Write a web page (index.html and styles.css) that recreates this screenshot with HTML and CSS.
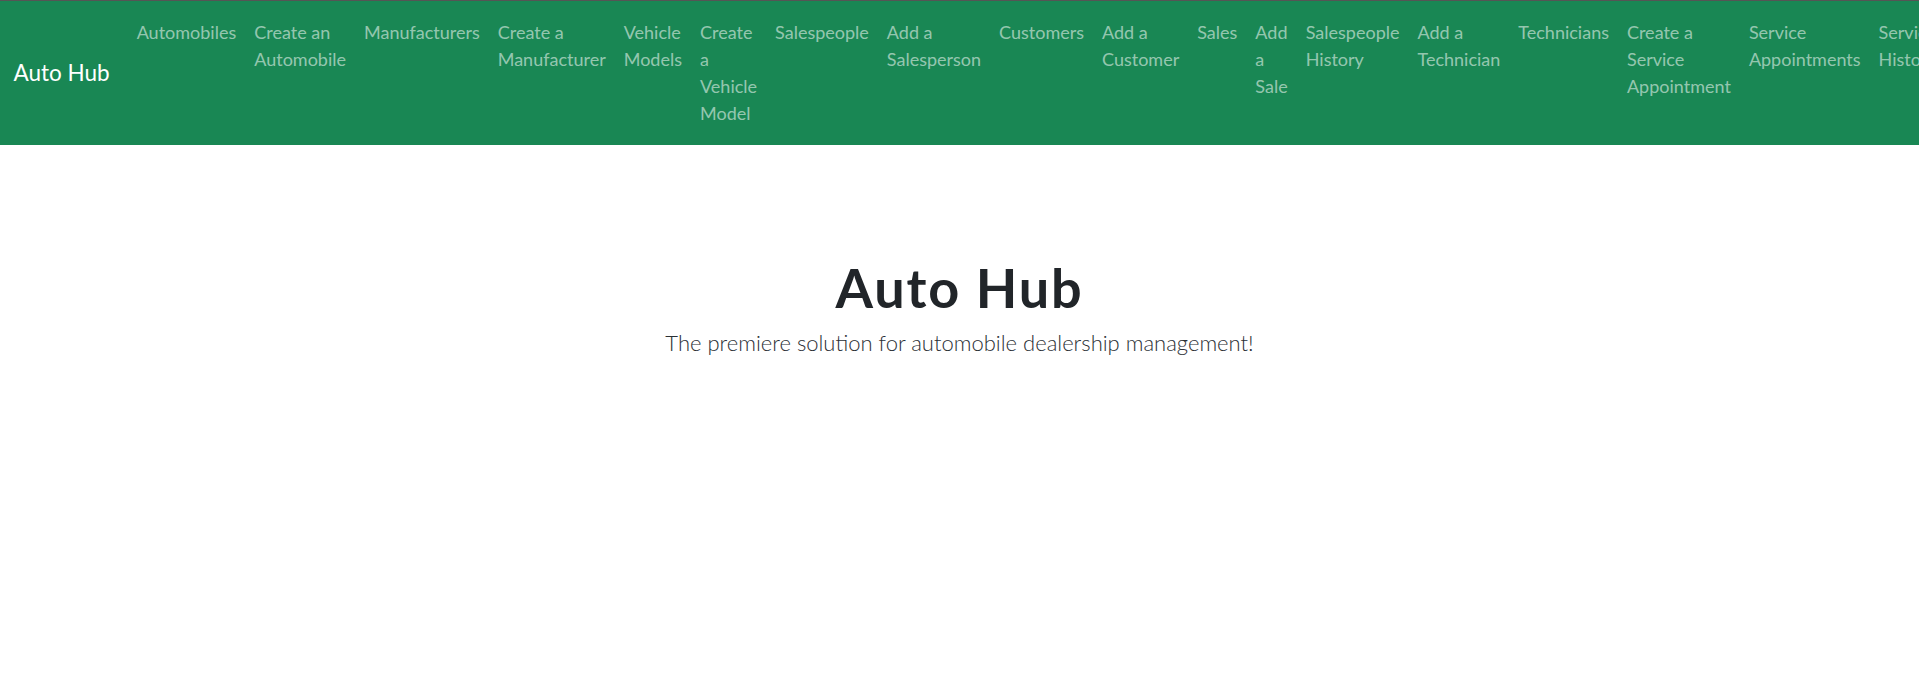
FILE: index.html
```html
<!DOCTYPE html>
<html lang="en">
<head>
<meta charset="utf-8">
<title>Auto Hub</title>
<link rel="stylesheet" href="styles.css">
</head>
<body>
<nav class="navbar">
  <div class="navbar-inner">
    <a class="brand" href="#">Auto Hub</a>
    <div class="collapse">
      <ul class="nav-list">
        <li class="nav-item"><a class="nav-link" href="#">Automobiles</a></li>
        <li class="nav-item"><a class="nav-link" href="#">Create an Automobile</a></li>
        <li class="nav-item"><a class="nav-link" href="#">Manufacturers</a></li>
        <li class="nav-item"><a class="nav-link" href="#">Create a Manufacturer</a></li>
        <li class="nav-item"><a class="nav-link" href="#">Vehicle Models</a></li>
        <li class="nav-item"><a class="nav-link" href="#">Create a Vehicle Model</a></li>
        <li class="nav-item"><a class="nav-link" href="#">Salespeople</a></li>
        <li class="nav-item"><a class="nav-link" href="#">Add a Salesperson</a></li>
        <li class="nav-item"><a class="nav-link" href="#">Customers</a></li>
        <li class="nav-item"><a class="nav-link" href="#">Add a Customer</a></li>
        <li class="nav-item"><a class="nav-link" href="#">Sales</a></li>
        <li class="nav-item"><a class="nav-link" href="#">Add a Sale</a></li>
        <li class="nav-item"><a class="nav-link" href="#">Salespeople History</a></li>
        <li class="nav-item"><a class="nav-link" href="#">Add a Technician</a></li>
        <li class="nav-item"><a class="nav-link" href="#">Technicians</a></li>
        <li class="nav-item"><a class="nav-link" href="#">Create a Service Appointment</a></li>
        <li class="nav-item"><a class="nav-link" href="#">Service Appointments</a></li>
        <li class="nav-item"><a class="nav-link" href="#">Service History</a></li>
      </ul>
    </div>
  </div>
</nav>
<main class="hero">
  <h1 class="hero-title">Auto Hub</h1>
  <div class="hero-body">
    <p class="lead">The premiere solution for automobile dealership management!</p>
  </div>
</main>
</body>
</html>
```
FILE: styles.css
```css
html, body {
  margin: 0;
  padding: 0;
  overflow: hidden;
}
body {
  font-family: Lato, "Open Sans", sans-serif;
  font-size: 18px;
  line-height: 1.5;
  color: #212529;
  background: #fff;
  width: 1919px;
}
.navbar {
  background: #198754;
  border-top: 1px solid #555;
  padding: 9px 0;
}
.navbar-inner {
  display: flex;
  align-items: center;
  padding: 0 13.5px;
}
.brand {
  font-size: 22.5px;
  line-height: 1.5;
  padding: 5.6px 0;
  margin-right: 18px;
  color: #fff;
  text-decoration: none;
  white-space: nowrap;
}
.collapse {
  display: flex;
  flex: 1 0 auto;
  align-items: center;
}
.nav-list {
  display: flex;
  flex-direction: row;
  list-style: none;
  margin: 0;
  padding: 0;
}
.nav-item {
  flex: 0 1 auto;
  min-width: min-content;
}
.nav-link {
  display: block;
  padding: 9px;
  width: min-content;
  color: rgba(255, 255, 255, 0.55);
  text-decoration: none;
  line-height: 27px;
}
.hero {
  display: block;
  margin: 54px 0;
  padding: 54px 27px;
  text-align: center;
}
.hero-title {
  margin: 0 0 5px;
  font-size: 54px;
  font-weight: 700;
  line-height: 1.2;
  letter-spacing: 1.8px;
  padding-top: 3px;
}
.hero-body {
  width: 50%;
  margin: 0 auto;
}
.lead {
  margin: 0 0 27px;
  font-size: 22px;
  font-weight: 300;
  line-height: 1.5;
  color: #2b3035;
}
```
